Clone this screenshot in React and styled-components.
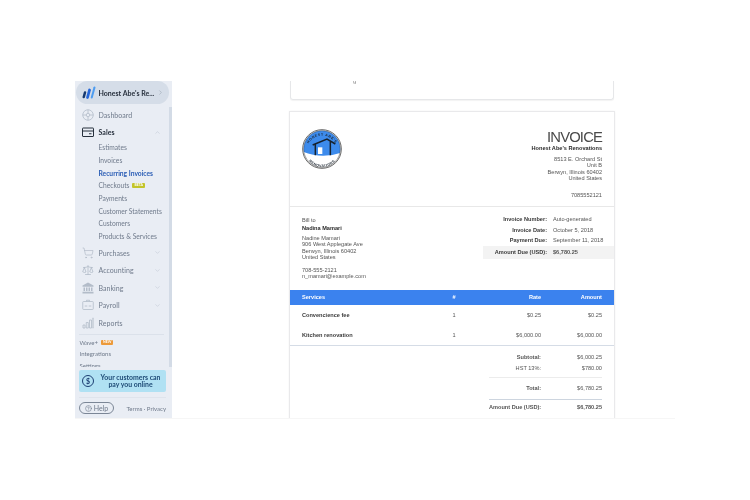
import React from "react";
import styled, { createGlobalStyle } from "styled-components";
import { ChevronDown, ChevronUp, ChevronRight, ShoppingCart, Scale, CircleHelp } from "lucide-react";

const GlobalStyle = createGlobalStyle`
  html, body {
    margin: 0;
    padding: 0;
    background: #fff;
    font-family: "Liberation Sans", Arial, sans-serif;
  }
`;

const subItems = [
  { label: "Estimates" },
  { label: "Invoices" },
  { label: "Recurring Invoices", active: true },
  { label: "Checkouts", badge: "BETA" },
  { label: "Payments" },
  { label: "Customer Statements" },
  { label: "Customers" },
  { label: "Products & Services" },
];

const PayrollIcon = () => (
  <svg width="12" height="12" viewBox="0 0 24 24" fill="none" stroke="currentColor" strokeWidth="1.6">
    <rect x="1.5" y="5" width="21" height="16" rx="1.5" />
    <path d="M9 5V2.5h6V5M5.5 14h5M13.5 14h5" />
  </svg>
);

const DashboardIcon = () => (
  <svg width="12" height="12" viewBox="0 0 24 24" fill="none" stroke="currentColor" strokeWidth="1.6">
    <circle cx="12" cy="12" r="10.5" />
    <path d="M12 1.5v7M12 15.5v7M1.5 12h7M15.5 12h7" />
    <circle cx="12" cy="12" r="3.5" />
  </svg>
);

const SalesIcon = () => (
  <svg width="12" height="12" viewBox="0 0 24 24" fill="none" stroke="#27303d" strokeWidth="2">
    <rect x="1" y="4" width="22" height="17" rx="1" />
    <path d="M1 10h22M14 15.5h5" />
  </svg>
);

const BankIcon = () => (
  <svg width="12" height="12" viewBox="0 0 24 24" fill="currentColor">
    <path d="M12 1 L23 7 V9.5 H1 V7 Z" />
    <path d="M3 11h3v7H3zM8 11h3v7H8zM13 11h3v7h-3zM18 11h3v7h-3z" />
    <path d="M1 19.5h22V23H1z" />
  </svg>
);

const ReportsIcon = () => (
  <svg width="12" height="12" viewBox="0 0 24 24" fill="none" stroke="currentColor" strokeWidth="1.6">
    <path d="M2 16h4v6H2zM8.5 11h4v11h-4zM15 6h4v16h-4z" />
    <path d="M21 2h2v20h-2z" strokeWidth="1" />
  </svg>
);

const WaveLogo = () => (
  <svg width="14" height="14" viewBox="0 0 28 28" fill="none" strokeLinecap="round">
    <path d="M6 13 L3.5 22" stroke="#16396f" strokeWidth="5" />
    <path d="M15 8 L11 23" stroke="#2566d8" strokeWidth="5.5" />
    <path d="M25 3 L19.5 23" stroke="#4d9cf0" strokeWidth="4" />
  </svg>
);

const HouseLogo = () => (
  <svg width="40" height="40" viewBox="0 0 120 120">
    <defs>
      <path id="arcTop" d="M 14 66 A 46 46 0 0 1 106 66" />
      <path id="arcBottom" d="M 8 62 A 52 52 0 0 0 112 62" />
      <clipPath id="disc">
        <circle cx="60" cy="60" r="55" />
      </clipPath>
    </defs>
    <circle cx="60" cy="60" r="58" fill="#fff" stroke="#6b6b6b" strokeWidth="3" />
    <g clipPath="url(#disc)">
      <path d="M0 0H120V70Q60 92 0 67Z" fill="#3d8bec" />
    </g>
    <circle cx="60" cy="60" r="55" fill="none" stroke="#222" strokeWidth="1.2" />
    <path d="M32 48 L75 30 L100 45 M40 46V79M85 38V79" fill="none" stroke="#17222e" strokeWidth="4.5" />
    <rect x="48" y="55" width="13" height="20" fill="#fff" />
    <text fontFamily="'Liberation Sans', sans-serif" fontSize="10.5" fontWeight="700" letterSpacing="1.6" fill="#1b2530">
      <textPath href="#arcTop" startOffset="50%" textAnchor="middle">HONEST ABE'S</textPath>
    </text>
    <text fontFamily="'Liberation Sans', sans-serif" fontSize="10.5" fontWeight="700" letterSpacing="1.2" fill="#1b2530">
      <textPath href="#arcBottom" startOffset="50%" textAnchor="middle">RENOVATIONS</textPath>
    </text>
  </svg>
);

const Page = styled.div`
  padding: 81px 0 0 75px;
  width: 750px;
  height: 500px;
  box-sizing: border-box;
  overflow: hidden;
`;

const Frame = styled.div`
  display: flex;
  width: 600px;
  height: 337px;
  overflow: hidden;
  border-bottom: 1px solid #f6f6f6;
  filter: blur(0.35px);
`;

const Sidebar = styled.aside`
  display: flex;
  flex-direction: column;
  flex: 0 0 97px;
  background: #e9edf4;
  font-family: Lato, sans-serif;
  color: #5f6b7c;
  box-sizing: border-box;
`;

const BusinessPill = styled.div`
  display: flex;
  align-items: center;
  gap: 2.5px;
  flex: none;
  width: 93px;
  height: 23px;
  margin-left: 1px;
  padding: 0 5px 0 6px;
  box-sizing: border-box;
  background: #d5dde8;
  border-radius: 12px;
  font-size: 7px;
  font-weight: 700;
  color: #27303d;
  white-space: nowrap;
  svg:last-child {
    margin-left: auto;
    color: #9aa5b4;
  }
`;

const NavScroll = styled.div`
  flex: 1;
  min-height: 0;
  overflow: hidden;
  position: relative;
  padding-top: 2px;
`;

const Scrollbar = styled.div`
  position: absolute;
  right: 0;
  top: 3px;
  bottom: 0;
  width: 3px;
  background: #d3dbe6;
`;

const NavRow = styled.div`
  display: flex;
  align-items: center;
  height: 17.5px;
  padding: 0 11px 0 7px;
  font-size: 7px;
  letter-spacing: 0.05px;
  font-weight: ${(p) => (p.$strong ? 700 : 400)};
  color: ${(p) => (p.$strong ? "#27303d" : "#6f7a8b")};
`;

const NavIcon = styled.span`
  display: flex;
  width: 16.5px;
  color: #b3bcc9;
`;

const Caret = styled.span`
  display: flex;
  margin-left: auto;
  color: #c2cad5;
`;

const SubList = styled.div`
  padding: 0 0 1.5px 23.5px;
`;

const SubItem = styled.div`
  display: flex;
  align-items: center;
  gap: 3px;
  height: 12.7px;
  font-size: 6.7px;
  font-weight: ${(p) => (p.$active ? 700 : 400)};
  color: ${(p) => (p.$active ? "#2a5db5" : "#6f7a8b")};
  white-space: nowrap;
`;

const Badge = styled.span`
  padding: 0 2px;
  font-size: 3.5px;
  line-height: 5px;
  font-weight: 700;
  color: #fff;
  border-radius: 1px;
  background: ${(p) => p.$bg};
`;

const NavRule = styled.div`
  height: 1px;
  margin: 2px 8px 2px 4px;
  background: #dbe1ea;
`;

const SmallLink = styled.div`
  display: flex;
  align-items: center;
  gap: 3px;
  height: 11.5px;
  padding-left: 4.5px;
  font-size: 6px;
  color: #6f7a8b;
`;

const Promo = styled.div`
  display: flex;
  align-items: center;
  gap: 4px;
  height: 22px;
  flex: none;
  margin: 3px 6px 5px 4px;
  padding: 0 3px 0 3px;
  box-sizing: border-box;
  border-radius: 2px;
  background: #b0e1f3;
  color: #1d4a75;
  font-size: 6.9px;
  font-weight: 700;
  line-height: 7.5px;
  text-align: center;
`;

const DollarBadge = styled.span`
  display: flex;
  align-items: center;
  justify-content: center;
  flex: none;
  width: 12px;
  height: 12px;
  box-sizing: border-box;
  border: 1.5px solid #1d3f73;
  border-radius: 50%;
  font-size: 7px;
  line-height: 1;
  color: #1d3f73;
`;

const SideFooter = styled.div`
  display: flex;
  align-items: center;
  justify-content: space-between;
  flex: none;
  height: 21px;
  margin: 0 6px 0 4px;
  box-sizing: border-box;
  border-top: 1px solid #dfe4ec;
  font-size: 6px;
  color: #6f7a8b;
`;

const HelpButton = styled.div`
  display: flex;
  align-items: center;
  justify-content: center;
  gap: 2px;
  width: 35px;
  height: 12px;
  box-sizing: border-box;
  border: 1px solid #7b8696;
  border-radius: 7px;
  font-size: 7px;
  color: #6f7a8b;
`;

const Main = styled.main`
  flex: 1;
  min-width: 0;
  background: #fff;
  padding-left: 118px;
  overflow: hidden;
`;

const PrevCard = styled.div`
  width: 324px;
  height: 19px;
  box-sizing: border-box;
  padding: 0 0 0 62px;
  border: 1px solid #e6e7e9;
  border-top: 0;
  border-radius: 0 0 3px 3px;
  box-shadow: 0 1px 1px rgba(0, 0, 0, 0.05);
  color: #888;
  font-size: 6px;
  line-height: 0;
`;

const Card = styled.div`
  width: 324px;
  margin-top: 12px;
  padding-bottom: 30px;
  color: #555;
  font-size: 5.6px;
  line-height: 6.4px;
  box-shadow: 0 0 0 1px #e9e9eb, 0 0 2px 1px rgba(0, 0, 0, 0.05);
`;

const Head = styled.header`
  display: flex;
  justify-content: space-between;
  height: 95px;
  padding: 17px 12px 0;
  box-sizing: border-box;
  border-bottom: 1px solid #e8e8e8;
`;

const Company = styled.div`
  text-align: right;
`;

const Title = styled.h1`
  margin: 0;
  font-size: 14.8px;
  line-height: 16px;
  font-weight: 400;
  letter-spacing: -0.85px;
  color: #4a4a4a;
`;

const CompanyName = styled.div`
  font-weight: 700;
  color: #2a2a2a;
  margin: 0 0 4px;
  line-height: 7px;
`;

const Phone = styled.div`
  margin-top: 10px;
`;

const Details = styled.section`
  display: flex;
  justify-content: space-between;
  height: 83px;
  padding-top: 7px;
  box-sizing: border-box;
`;

const BillTo = styled.div`
  padding: 3px 0 0 12px;
`;

const BillName = styled.div`
  font-weight: 700;
  color: #2a2a2a;
  margin: 1.6px 0 3.5px;
`;

const BlockGap = styled.div`
  height: ${(p) => p.$h}px;
`;

const Meta = styled.div`
  width: 131px;
`;

const MetaRow = styled.div`
  display: grid;
  grid-template-columns: 64px 61px;
  column-gap: 6px;
  align-items: center;
  height: ${(p) => (p.$band ? 13 : 10.5)}px;
  background: ${(p) => (p.$band ? "#f3f3f3" : "transparent")};
  span:first-child {
    text-align: right;
    font-weight: 700;
    color: #3a3a3a;
  }
  span:last-child {
    font-weight: ${(p) => (p.$band ? 700 : 400)};
  }
`;

const ItemGrid = styled.div`
  display: grid;
  grid-template-columns: 140px 24px 75px 61px;
  align-items: center;
  padding: 0 12px;
  height: ${(p) => p.$h}px;
  background: ${(p) => p.$bg || "transparent"};
  color: ${(p) => p.$color || "#555"};
  font-weight: ${(p) => (p.$bold ? 700 : 400)};
  span:nth-child(2) {
    text-align: center;
  }
  span:nth-child(n + 3) {
    text-align: right;
  }
  span:first-child {
    font-weight: 700;
    color: ${(p) => p.$color || "#3a3a3a"};
  }
`;

const Items = styled.div`
  border-bottom: 1px solid #d5dce6;
`;

const Totals = styled.div`
  width: 113px;
  margin: 6px 12px 0 auto;
`;

const TotalRow = styled.div`
  display: grid;
  grid-template-columns: 52px 61px;
  align-items: center;
  height: ${(p) => p.$h || 11}px;
  white-space: nowrap;
  span:first-child {
    text-align: right;
    font-weight: ${(p) => (p.$light ? 400 : 700)};
  }
  span:last-child {
    text-align: right;
    font-weight: ${(p) => (p.$strong ? 700 : 400)};
  }
`;

const TotalRule = styled.div`
  height: 1px;
  background: ${(p) => (p.$dark ? "#cdd5df" : "#ececec")};
  margin: ${(p) => p.$m};
`;

const navBottom = [
  { label: "Purchases", icon: <ShoppingCart size={12} strokeWidth={1.4} />, caret: true },
  { label: "Accounting", icon: <Scale size={12} strokeWidth={1.6} />, caret: true },
  { label: "Banking", icon: <BankIcon />, caret: true },
  { label: "Payroll", icon: <PayrollIcon />, caret: true },
  { label: "Reports", icon: <ReportsIcon /> },
];

export default function App() {
  return (
    <>
      <GlobalStyle />
      <Page>
        <Frame>
          <Sidebar>
            <BusinessPill>
              <WaveLogo />
              <span>Honest Abe's Re...</span>
              <ChevronRight size={7} />
            </BusinessPill>
            <NavScroll>
              <Scrollbar />
              <NavRow>
                <NavIcon><DashboardIcon /></NavIcon>
                Dashboard
              </NavRow>
              <NavRow $strong>
                <NavIcon><SalesIcon /></NavIcon>
                Sales
                <Caret><ChevronUp size={7} /></Caret>
              </NavRow>
              <SubList>
                {subItems.map((item) => (
                  <SubItem key={item.label} $active={item.active}>
                    {item.label}
                    {item.badge && <Badge $bg="#c3c42a">{item.badge}</Badge>}
                  </SubItem>
                ))}
              </SubList>
              {navBottom.map((item) => (
                <NavRow key={item.label}>
                  <NavIcon>{item.icon}</NavIcon>
                  {item.label}
                  {item.caret && <Caret><ChevronDown size={7} /></Caret>}
                </NavRow>
              ))}
              <NavRule />
              <SmallLink>
                Wave+ <Badge $bg="#ec9a3a">NEW</Badge>
              </SmallLink>
              <SmallLink>Integrations</SmallLink>
              <SmallLink>Settings</SmallLink>
            </NavScroll>
            <Promo>
              <DollarBadge>$</DollarBadge>
              <span>Your customers can pay you online</span>
            </Promo>
            <SideFooter>
              <HelpButton>
                <CircleHelp size={7} />
                Help
              </HelpButton>
              <span>Terms · Privacy</span>
            </SideFooter>
          </Sidebar>
          <Main>
            <PrevCard>g</PrevCard>
            <Card>
              <Head>
                <HouseLogo />
                <Company>
                  <Title>INVOICE</Title>
                  <CompanyName>Honest Abe's Renovations</CompanyName>
                  <div>8513 E. Orchard St</div>
                  <div>Unit B</div>
                  <div>Berwyn, Illinois 60402</div>
                  <div>United States</div>
                  <Phone>7085552121</Phone>
                </Company>
              </Head>
              <Details>
                <BillTo>
                  <div>Bill to</div>
                  <BillName>Nadina Mamari</BillName>
                  <div>Nadine Mamari</div>
                  <div>906 West Applegate Ave</div>
                  <div>Berwyn, Illinois 60402</div>
                  <div>United States</div>
                  <BlockGap $h={6} />
                  <div>708-555-2121</div>
                  <div>n_mamari@example.com</div>
                </BillTo>
                <Meta>
                  <MetaRow><span>Invoice Number:</span><span>Auto-generated</span></MetaRow>
                  <MetaRow><span>Invoice Date:</span><span>October 5, 2018</span></MetaRow>
                  <MetaRow><span>Payment Due:</span><span>September 11, 2018</span></MetaRow>
                  <MetaRow $band><span>Amount Due (USD):</span><span>$6,780.25</span></MetaRow>
                </Meta>
              </Details>
              <ItemGrid $h={15} $bg="#3b82ee" $color="#fff" $bold>
                <span>Services</span>
                <span>#</span>
                <span>Rate</span>
                <span>Amount</span>
              </ItemGrid>
              <Items>
                <ItemGrid $h={20}>
                  <span>Convencience fee</span>
                  <span>1</span>
                  <span>$0.25</span>
                  <span>$0.25</span>
                </ItemGrid>
                <ItemGrid $h={20}>
                  <span>Kitchen renovation</span>
                  <span>1</span>
                  <span>$6,000.00</span>
                  <span>$6,000.00</span>
                </ItemGrid>
              </Items>
              <Totals>
                <TotalRow><span>Subtotal:</span><span>$6,000.25</span></TotalRow>
                <TotalRow $light><span>HST 13%:</span><span>$780.00</span></TotalRow>
                <TotalRule $m="3px 0 5px" />
                <TotalRow><span>Total:</span><span>$6,780.25</span></TotalRow>
                <TotalRule $m="5px 0 2px" $dark />
                <TotalRow $strong><span>Amount Due (USD):</span><span>$6,780.25</span></TotalRow>
              </Totals>
            </Card>
          </Main>
        </Frame>
      </Page>
    </>
  );
}
